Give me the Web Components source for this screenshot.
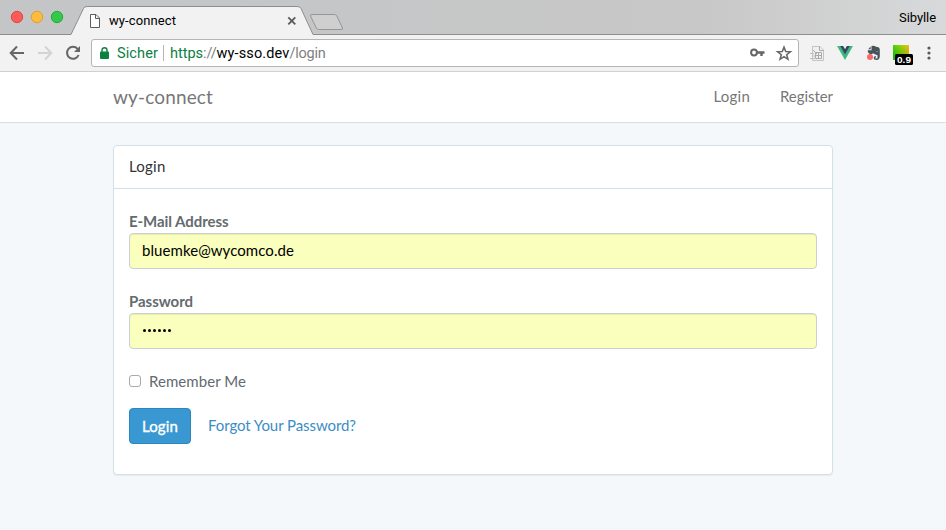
<!DOCTYPE html>
<html lang="de"><head><meta charset="utf-8"><title>wy-connect</title>
<style>html,body{margin:0;height:100%;overflow:hidden;background:#f5f8fa}</style></head><body>
<app-window></app-window>
<script>
const def=(name,html,cb)=>{
  const t=document.createElement('template');t.innerHTML=html;
  customElements.define(name,class extends HTMLElement{
    constructor(){super();this.attachShadow({mode:'open'}).append(t.content.cloneNode(true));}
    connectedCallback(){cb&&cb(this);}
  });
};

/* single line of text tracked to a given width */
def('fit-text','<style>:host{display:inline-block;white-space:nowrap;line-height:1;padding-bottom:var(--lift,0)}span{display:inline-block}</style><span><slot></slot></span>',el=>{
  const s=el.shadowRoot.querySelector('span'),w=+el.getAttribute('width');
  const n=el.textContent.length;
  s.style.letterSpacing=((w-s.getBoundingClientRect().width)/n)+'px';
});

def('tab-strip',`<style>
:host{display:block;position:relative;height:35px;background:linear-gradient(90deg,#c3c5c6,#c5c6c7 35%,#c8c8c8 75%,#d8d9da);font:13px Roboto,sans-serif;color:#000}
svg{position:absolute;left:0;top:0}
.row{position:relative;display:flex;align-items:center;height:35px;padding:5px 10px 0 109px;box-sizing:border-box}
.user{margin-left:auto;--lift:5px}
</style>
<svg width="946" height="35">
<path d="M-1 34.5H71L83.5 8.5Q84.5 6.5 87 6.5H297Q300 6.5 301 8.5L313 34.5H947V36H-1Z" fill="#f2f2f2" stroke="#8e8e8e"/>
<g stroke-width="1"><circle cx="17" cy="17" r="5.7" fill="#fc5b57" stroke="#df4744"/><circle cx="37" cy="17" r="5.7" fill="#fdbc40" stroke="#de9f34"/><circle cx="57" cy="17" r="5.7" fill="#34c84a" stroke="#27aa35"/></g>
<path d="M90.5 14.5H96L99.5 18V27.5H90.5ZM95.5 14.5V18.5H99.5" fill="#fff" stroke="#5d5d5d"/>
<path d="M288.3 17.3L295.3 24.3M295.3 17.3L288.3 24.3" stroke="#5a5a5a" stroke-width="1.8"/>
<path d="M312 14.5H334.5Q336 14.5 336.8 16L342.5 28Q343 29.5 341 29.5H318.500Q317 29.500 316.300 28L310.500 16Q310 14.500 312 14.500Z" fill="#cfcfcf" stroke="#969696"/>
</svg>
<div class="row"><fit-text width="67">wy-connect</fit-text><fit-text class="user" width="37">Sibylle</fit-text></div>`);

def('tool-bar',`<style>
:host{display:flex;box-sizing:border-box;height:37px;background:#f2f2f2;border-bottom:1px solid #d0d0d0;padding:4px 8px 0;align-items:flex-start;font:14.500px Roboto,sans-serif}
svg{display:block;flex:none}
.nav{width:83px}
.omni{box-sizing:border-box;width:708px;height:28px;border:1px solid #b5b5b5;border-radius:3px;background:#fff;display:flex;align-items:center;color:#0b8043}
.omni fit-text{padding-top:2px}
.lock{margin:0 8px 0 8px}.sep{width:1px;height:16px;background:#b4b4b4;margin:0 6px 0 5px}
.url{display:flex}.host{color:#000}.path{color:#808080}
.right{margin-left:auto}.ext{width:139px}
text{font:bold 9.500px "Liberation Sans",sans-serif}
</style>
<svg class="nav" width="83" height="28" viewBox="8 39 83 28" fill="none" stroke-width="2"><g stroke="#666"><path d="M24 53H11M17 46.500L10.700 53L17 59.500"/><path d="M77.600 48.900A6 6 0 1 0 78.600 55"/><path d="M80 46V52H74Z" fill="#666" stroke="none"/></g><path stroke="#d3d3d3" d="M38 53H51M45 46.500L51.300 53L45 59.500"/></svg>
<div class="omni"><svg class="lock" width="9" height="12"><path d="M1 4.500H8Q9 4.500 9 5.500V11Q9 12 8 12H1Q0 12 0 11V5.500Q0 4.500 1 4.500Z" fill="#0b8043"/><path d="M2 5V3A2.500 2.300 0 0 1 7 3V5" fill="none" stroke="#0b8043" stroke-width="1.400"/></svg>
<fit-text width="41">Sicher</fit-text><div class="sep"></div>
<div class="url"><fit-text width="33">https</fit-text><fit-text class="path" width="13.500">://</fit-text><fit-text class="host" width="73">wy-sso.dev</fit-text><fit-text class="path" width="36">/login</fit-text></div>
<svg class="right" width="50" height="26" viewBox="748 40 50 26"><g fill="none" stroke="#666"><circle cx="754" cy="52.500" r="2.900" stroke-width="2"/><path d="M757 52.500H764.500M761.500 52.500V56" stroke-width="2.400"/><path d="M784 47L785.700 51.500L790.500 51.700L786.700 54.700L788 59.300L784 56.700L780 59.300L781.300 54.700L777.500 51.700L782.300 51.500Z" stroke-width="1.500"/></g></svg></div>
<svg class="ext" width="139" height="28" viewBox="799 39 139 28">
<path d="M812.500 46.500H820L823.500 50V60.500H812.500Z" fill="#f0f0f0" stroke="#c4c4c4"/><path d="M819.500 46.500V50.500H823.500M815.500 52.500H821.500V58.500H815.500ZM818.500 52V59M815 55.500H822M813 50L817 54" fill="none" stroke="#aaa"/><path d="M810 53.500H814M812 56H815M810 58.500H815" stroke="#c0c0c0"/>
<path d="M837 46H842.500L845 50.200L847.500 46H853L845 60Z" fill="#41b883"/><path d="M840.200 46H843.200L845 49.200L846.800 46H849.800L845 54.500Z" fill="#34495e"/>
<path d="M871.500 46Q874.500 45.500 876 46.800L878.500 47.300Q879.800 48 879.800 50V56Q879.800 60 876.500 60Q873.500 60 873.700 57.500Q874 56 876 56.200V57.500H875.300V58.500H877.500V55.200Q874.500 54.500 873 53.300Q871.500 55 869 53.500Q867.500 52 867.700 50.300H871.500Z" fill="#47535a"/><path d="M868.200 49.200L870.700 46.600V49.200Z" fill="#47535a"/><path d="M876 51.700Q877.200 50.500 878 52Z" fill="#dde"/><circle cx="870" cy="57" r="3" fill="#f96a67"/>
<defs><linearGradient id="g"><stop stop-color="#10bd10"/><stop offset=".5" stop-color="#70c40c"/><stop offset="1" stop-color="#f0a51d"/></linearGradient><linearGradient id="h" x2="0" y2="1"><stop stop-color="#ff0" stop-opacity=".3"/><stop offset="1" stop-color="#080" stop-opacity=".15"/></linearGradient></defs><path fill="url(#g)" d="M893 45H909V60H893Z"/><path fill="url(#h)" d="M893 45H909V60H893Z"/><rect x="895" y="54" width="18" height="11" rx="1.500"/><text x="897" y="63" fill="#fff" textLength="14" lengthAdjust="spacingAndGlyphs">0.9</text>
<g fill="#5a5a5a"><circle cx="929" cy="48" r="1.600"/><circle cx="929" cy="53" r="1.600"/><circle cx="929" cy="58" r="1.600"/></g></svg>`);

def('site-nav',`<style>:host{display:flex;box-sizing:border-box;height:51px;align-items:center;padding:0 113px;background:#fff;border-bottom:1px solid #d3e0e9;color:#777;font:15px Lato,sans-serif;--lift:2px}
.brand{font-size:19px}.links{margin-left:auto;display:flex;gap:30px}</style>
<fit-text class="brand" width="100">wy-connect</fit-text><div class="links"><fit-text width="36.500">Login</fit-text><fit-text width="53">Register</fit-text></div>`);

def('form-field',`<style>:host{display:block;height:80px}.label{color:#636b6f;font-weight:bold;line-height:22px;height:22px;display:flex;align-items:center}
.box{box-sizing:border-box;height:36px;border:1px solid #ccd0d2;border-radius:4px;background:#faffbd;padding:0 12px;box-shadow:inset 0 1px 1px rgba(0,0,0,.075);display:flex;align-items:center;color:#000}</style><div class="label"><slot name="label"></slot></div><div class="box"><slot></slot></div>`);

def('login-panel',`<style>:host{display:block;box-sizing:border-box;width:720px;height:330px;margin:22px auto 0;background:#fff;border:1px solid #d3e0e9;border-radius:4px;box-shadow:0 1px 1px rgba(0,0,0,.05);color:#636b6f;font:15px Lato,sans-serif;--lift:2px}
header{box-sizing:border-box;height:43px;border-bottom:1px solid #d3e0e9;padding:0 15px;display:flex;align-items:center;color:#333}
form{padding:22px 15px}
.remember{display:flex;align-items:center;height:22px;margin-top:0}.cb{box-sizing:border-box;width:12px;height:12px;border:1px solid #a9a9a9;border-radius:3px;background:#fff;margin-right:8px;margin-bottom:2px}
.actions{display:flex;align-items:center;margin-top:15px;gap:17px}
button{box-sizing:border-box;width:62px;height:36px;padding:0;border:1px solid #2a88bd;border-radius:4px;background:#3997d1;color:#fff;font:15px Lato,sans-serif;-webkit-text-stroke:.35px #fff}
a{display:flex;color:#3c8dc5;text-decoration:none}
.dots{display:flex;gap:2px;padding:0 0 1px 1px}.dots i{width:3px;height:3px;border-radius:50%;background:#000}</style>
<header><fit-text width="36.500">Login</fit-text></header>
<form><form-field><fit-text slot="label" width="99.500">E-Mail Address</fit-text><fit-text width="152">bluemke@wycomco.de</fit-text></form-field>
<form-field><fit-text slot="label" width="64">Password</fit-text><div class="dots"><i></i><i></i><i></i><i></i><i></i><i></i></div></form-field>
<div class="remember"><span class="cb"></span><fit-text width="97">Remember Me</fit-text></div>
<div class="actions"><button type="button"><fit-text width="36">Login</fit-text></button><a><fit-text width="148">Forgot Your Password?</fit-text></a></div></form>`);

def('app-window',`<style>:host{display:block;width:946px;height:530px;background:#f5f8fa}</style><tab-strip></tab-strip><tool-bar></tool-bar><site-nav></site-nav><login-panel></login-panel>`);
</script></body></html>
